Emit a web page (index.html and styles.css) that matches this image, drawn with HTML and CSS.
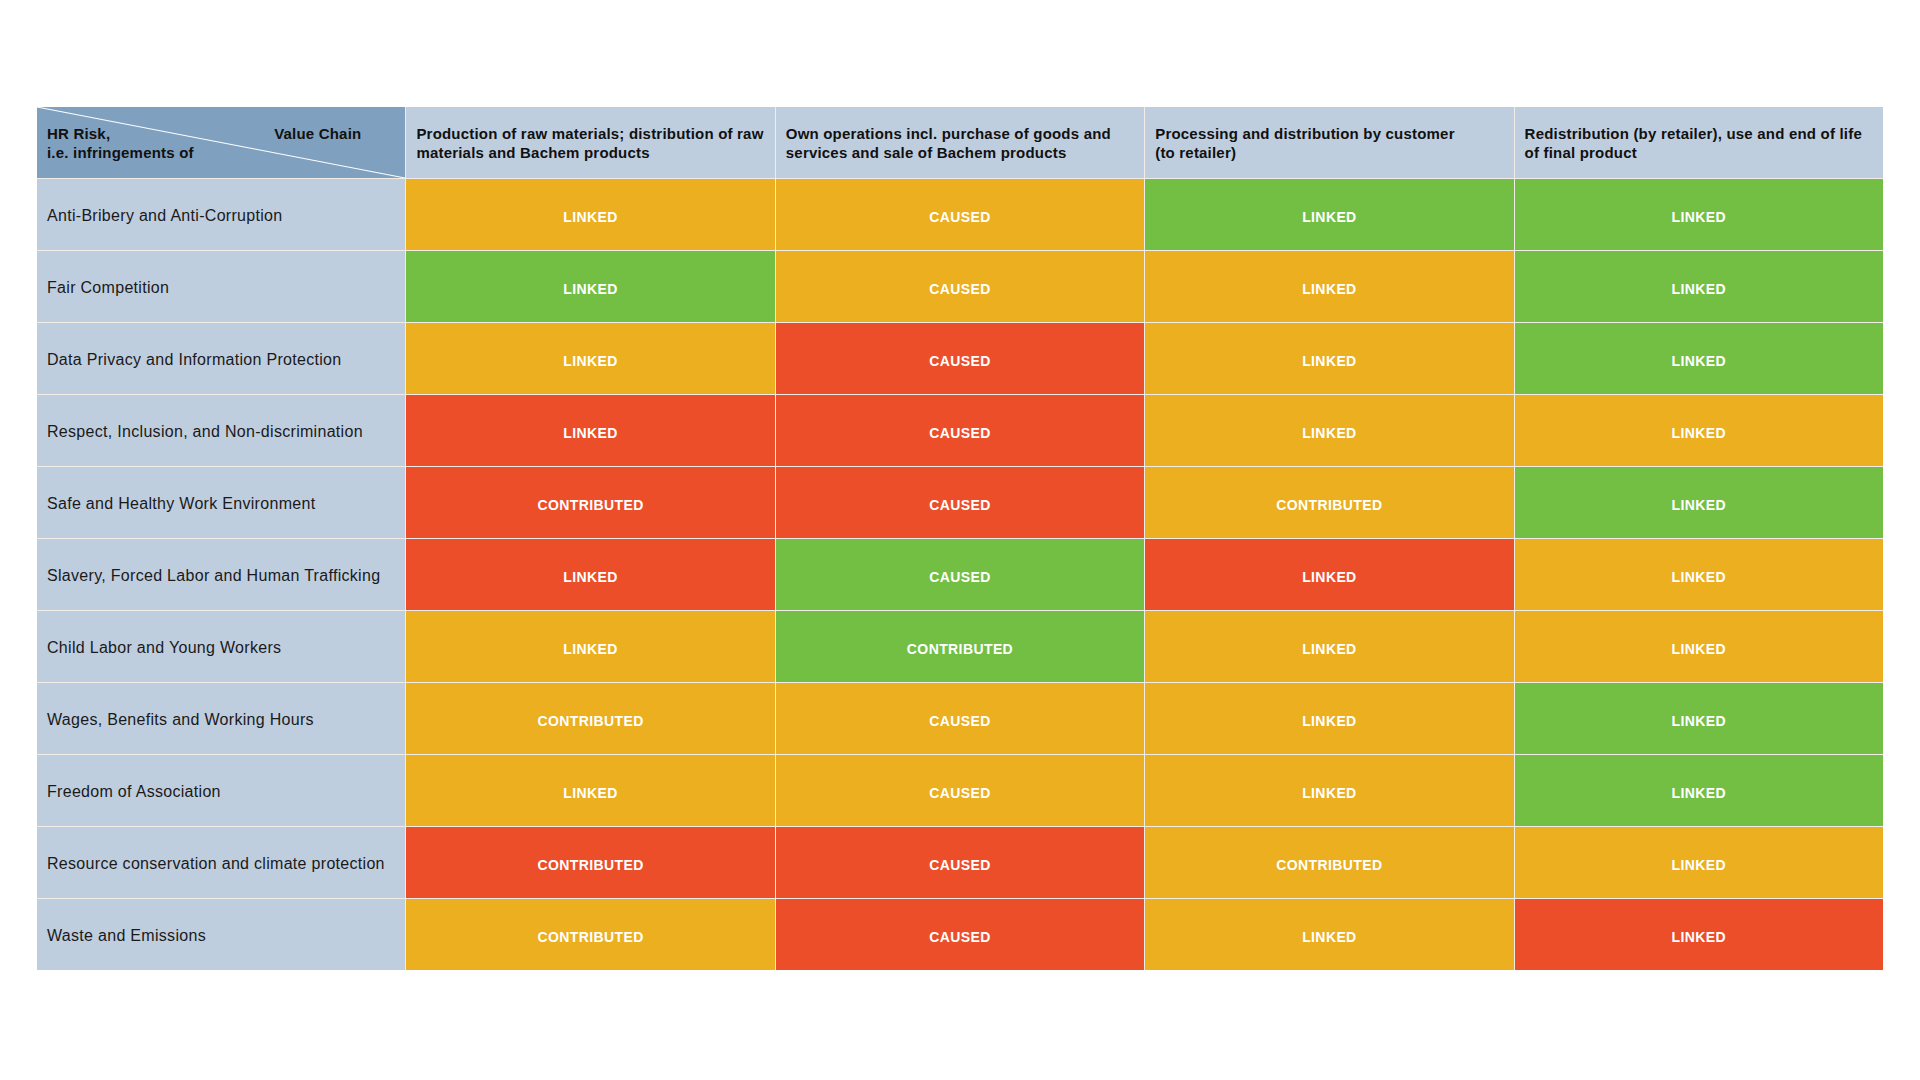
FILE: index.html
```html
<!DOCTYPE html>
<html lang="en">
<head>
<meta charset="utf-8">
<title>HR Risk Matrix</title>
<link rel="stylesheet" href="styles.css">
</head>
<body>
<div class="page">
  <div class="matrix">
    <div class="corner">
      <div class="corner-left">HR Risk,<br>i.e. infringements of</div>
      <div class="corner-right">Value Chain</div>
    </div>
    <div class="head">Production of raw materials; distribution of raw<br>materials and Bachem products</div>
    <div class="head">Own operations incl. purchase of goods and<br>services and sale of Bachem products</div>
    <div class="head">Processing and distribution by customer<br>(to retailer)</div>
    <div class="head">Redistribution (by retailer), use and end of life<br>of final product</div>

    <div class="risk">Anti-Bribery and Anti-Corruption</div>
    <div class="cell o">LINKED</div><div class="cell o">CAUSED</div><div class="cell g">LINKED</div><div class="cell g">LINKED</div>

    <div class="risk">Fair Competition</div>
    <div class="cell g">LINKED</div><div class="cell o">CAUSED</div><div class="cell o">LINKED</div><div class="cell g">LINKED</div>

    <div class="risk">Data Privacy and Information Protection</div>
    <div class="cell o">LINKED</div><div class="cell r">CAUSED</div><div class="cell o">LINKED</div><div class="cell g">LINKED</div>

    <div class="risk">Respect, Inclusion, and Non-discrimination</div>
    <div class="cell r">LINKED</div><div class="cell r">CAUSED</div><div class="cell o">LINKED</div><div class="cell o">LINKED</div>

    <div class="risk">Safe and Healthy Work Environment</div>
    <div class="cell r">CONTRIBUTED</div><div class="cell r">CAUSED</div><div class="cell o">CONTRIBUTED</div><div class="cell g">LINKED</div>

    <div class="risk">Slavery, Forced Labor and Human Trafficking</div>
    <div class="cell r">LINKED</div><div class="cell g">CAUSED</div><div class="cell r">LINKED</div><div class="cell o">LINKED</div>

    <div class="risk">Child Labor and Young Workers</div>
    <div class="cell o">LINKED</div><div class="cell g">CONTRIBUTED</div><div class="cell o">LINKED</div><div class="cell o">LINKED</div>

    <div class="risk">Wages, Benefits and Working Hours</div>
    <div class="cell o">CONTRIBUTED</div><div class="cell o">CAUSED</div><div class="cell o">LINKED</div><div class="cell g">LINKED</div>

    <div class="risk">Freedom of Association</div>
    <div class="cell o">LINKED</div><div class="cell o">CAUSED</div><div class="cell o">LINKED</div><div class="cell g">LINKED</div>

    <div class="risk">Resource conservation and climate protection</div>
    <div class="cell r">CONTRIBUTED</div><div class="cell r">CAUSED</div><div class="cell o">CONTRIBUTED</div><div class="cell o">LINKED</div>

    <div class="risk">Waste and Emissions</div>
    <div class="cell o">CONTRIBUTED</div><div class="cell r">CAUSED</div><div class="cell o">LINKED</div><div class="cell r">LINKED</div>
  </div>
</div>
</body>
</html>
```
FILE: styles.css
```css
html, body {
  margin: 0;
  padding: 0;
  background: #ffffff;
}

body {
  font-family: "Liberation Sans", Arial, sans-serif;
  color: #1a1a1a;
}

.page {
  padding: 107px 37px 0 37px;
}

.matrix {
  display: grid;
  grid-template-columns: repeat(5, 1fr);
  grid-auto-rows: 71px;
  gap: 1px;
  width: 1846px;
  background: #f1ece6;
}

.corner {
  background-color: #80a0c0;
  background-image: linear-gradient(to top right, transparent calc(50% - 1px), #ffffff 50%, transparent calc(50% + 1px));
  display: flex;
  align-items: center;
  justify-content: space-between;
  padding: 0 44px 0 10px;
  font-size: 15px;
  font-weight: 700;
  line-height: 19px;
  letter-spacing: 0.2px;
  color: #111;
}

.corner-right {
  padding-bottom: 19px;
}

.head {
  background: #bfcedf;
  display: flex;
  align-items: center;
  padding: 0 2px 0 10px;
  font-size: 15px;
  font-weight: 700;
  line-height: 19px;
  letter-spacing: 0.2px;
  white-space: nowrap;
  color: #111;
}

.risk {
  background: #bfcedf;
  display: flex;
  align-items: center;
  padding: 2px 10px 0 10px;
  font-size: 16px;
  letter-spacing: 0.3px;
  color: #1a1a1a;
}

.cell {
  display: flex;
  align-items: center;
  justify-content: center;
  padding-top: 4px;
  font-size: 14px;
  font-weight: 700;
  letter-spacing: 0.4px;
  color: #ffffff;
}

.o { background: #ebaf20; }
.g { background: #73bf44; }
.r { background: #ec4e2a; }
```
